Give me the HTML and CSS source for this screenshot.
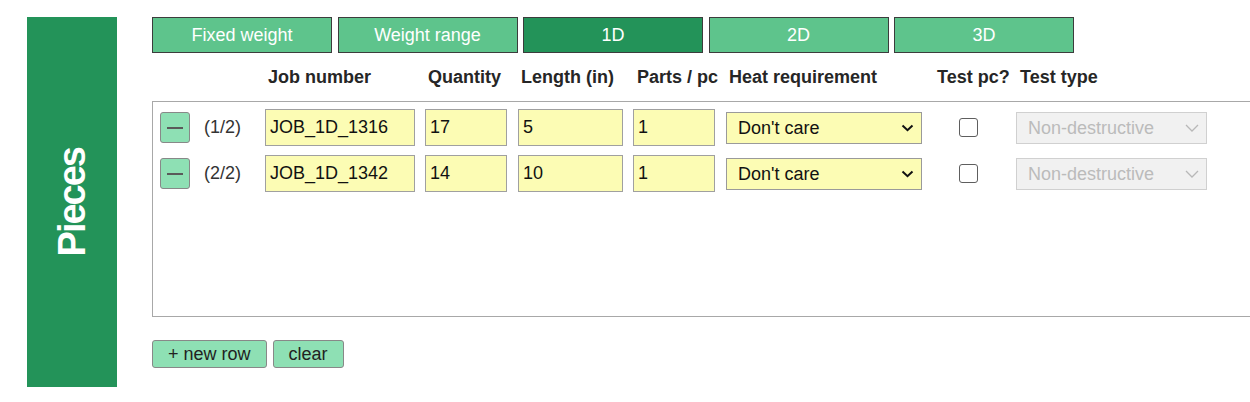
FILE: index.html
```html
<!DOCTYPE html>
<html lang="en">
<head>
<meta charset="utf-8">
<title>Pieces</title>
<link rel="stylesheet" href="styles.css">
</head>
<body>
<div class="page">
  <aside class="side"><span class="side-title">Pieces</span></aside>
  <main class="main">
    <nav class="tabs">
      <button class="tab">Fixed weight</button>
      <button class="tab">Weight range</button>
      <button class="tab active">1D</button>
      <button class="tab">2D</button>
      <button class="tab">3D</button>
    </nav>
    <div class="grid head">
      <span></span>
      <span></span>
      <span class="hcell">Job number</span>
      <span class="hcell">Quantity</span>
      <span class="hcell">Length (in)</span>
      <span class="hcell wide">Parts / pc</span>
      <span class="hcell">Heat requirement</span>
      <span class="hcell">Test pc?</span>
      <span class="hcell wide">Test type</span>
    </div>
    <div class="box">
      <div class="grid row">
        <button class="minus" aria-label="remove"><span class="dash"></span></button>
        <span class="idx">(1/2)</span>
        <input class="inp w-job" value="JOB_1D_1316">
        <input class="inp w-num" value="17">
        <input class="inp w-len" value="5">
        <input class="inp w-num" value="1">
        <div class="selwrap">
          <select class="sel"><option>Don't care</option></select>
          <svg class="chev" width="13" height="8" viewBox="0 0 13 8"><path d="M1.5 1.5 L6.5 6.2 L11.5 1.5" fill="none" stroke="#111" stroke-width="2"/></svg>
        </div>
        <input type="checkbox" class="chk">
        <div class="selwrap">
          <select class="sel dis" disabled><option>Non-destructive</option></select>
          <svg class="chev" width="14" height="8" viewBox="0 0 14 8"><path d="M1 1 L7 7 L13 1" fill="none" stroke="#b8b8b8" stroke-width="1.3"/></svg>
        </div>
      </div>
      <div class="grid row">
        <button class="minus" aria-label="remove"><span class="dash"></span></button>
        <span class="idx">(2/2)</span>
        <input class="inp w-job" value="JOB_1D_1342">
        <input class="inp w-num" value="14">
        <input class="inp w-len" value="10">
        <input class="inp w-num" value="1">
        <div class="selwrap">
          <select class="sel"><option>Don't care</option></select>
          <svg class="chev" width="13" height="8" viewBox="0 0 13 8"><path d="M1.5 1.5 L6.5 6.2 L11.5 1.5" fill="none" stroke="#111" stroke-width="2"/></svg>
        </div>
        <input type="checkbox" class="chk">
        <div class="selwrap">
          <select class="sel dis" disabled><option>Non-destructive</option></select>
          <svg class="chev" width="14" height="8" viewBox="0 0 14 8"><path d="M1 1 L7 7 L13 1" fill="none" stroke="#b8b8b8" stroke-width="1.3"/></svg>
        </div>
      </div>
    </div>
    <div class="actions">
      <button class="act">+ new row</button>
      <button class="act">clear</button>
    </div>
  </main>
</div>
</body>
</html>
```

FILE: styles.css
```css
* { box-sizing: border-box; }
html, body {
  margin: 0;
  padding: 0;
  background: #fff;
  overflow: hidden;
}
body {
  font-family: "Liberation Sans", Arial, sans-serif;
  font-size: 18px;
  color: #222;
}
.page {
  display: flex;
  gap: 35px;
  padding: 17px 0 0 27px;
  width: 1250px;
  height: 402px;
  overflow: hidden;
}
.side {
  flex: none;
  width: 90px;
  height: 370px;
  background: #239359;
  display: flex;
  align-items: center;
  justify-content: center;
}
.side-title {
  writing-mode: vertical-rl;
  transform: rotate(180deg);
  color: #fff;
  font-weight: bold;
  font-size: 38px;
  letter-spacing: -2px;
  line-height: 1;
}
.main {
  flex: none;
  width: 1110px;
  display: flex;
  flex-direction: column;
}
.tabs {
  display: flex;
  gap: 5.5px;
  height: 36px;
}
.tab {
  width: 180px;
  height: 36px;
  margin: 0;
  padding: 0;
  background: #5ec48c;
  border: 1px solid #3c3c3c;
  color: #fff;
  font-family: inherit;
  font-size: 18px;
}
.tab.active { background: #239359; }
.grid {
  display: grid;
  grid-template-columns: 44px 61px 160px 93px 115px 93px 208px 82px 191px;
  align-items: center;
}
.head {
  height: 48px;
  padding-left: 8px;
  font-weight: bold;
  color: #262626;
}
.hcell { padding-left: 3px; white-space: nowrap; }
.hcell.wide { padding-left: 4px; }
.box {
  height: 216px;
  border: 1px solid #a8a8a8;
  padding: 7px 0 0 7px;
  display: flex;
  flex-direction: column;
  gap: 9px;
}
.minus {
  width: 30px;
  height: 31px;
  margin: 0;
  padding: 0;
  background: #8ee0b4;
  border: 1px solid #888;
  border-radius: 3px;
  display: flex;
  align-items: center;
  justify-content: center;
}
.dash {
  display: block;
  width: 16px;
  height: 2px;
  background: #5a5a5a;
}
.idx { color: #333; }
.inp {
  height: 37px;
  margin: 0;
  padding: 0 0 0 4px;
  border: 1px solid #a0a0a0;
  background: #fcfcb4;
  font-family: inherit;
  font-size: 18px;
  color: #111;
  outline: none;
}
.w-job { width: 150px; }
.w-num { width: 82px; }
.w-len { width: 105px; }
.selwrap {
  position: relative;
  width: fit-content;
}
.sel {
  appearance: none;
  -webkit-appearance: none;
  width: 196px;
  height: 32px;
  margin: 0;
  padding: 0 0 0 11px;
  border: 1px solid #9a9a9a;
  border-radius: 0;
  background: #fcfcb4;
  font-family: inherit;
  font-size: 18px;
  color: #111;
  display: block;
}
.sel.dis {
  width: 191px;
  background: #f1f1f1;
  border-color: #d0d0d0;
  color: #bbb;
  opacity: 1;
}
.chev {
  position: absolute;
  right: 8px;
  top: 12px;
  pointer-events: none;
}
.chk {
  appearance: none;
  -webkit-appearance: none;
  width: 19px;
  height: 19px;
  margin: 0 0 0 25px;
  border: 1.5px solid #5e5e5e;
  border-radius: 3px;
  background: #fff;
}
.actions {
  display: flex;
  gap: 6px;
  margin-top: 23px;
}
.act {
  height: 28px;
  margin: 0;
  padding: 0 15px;
  background: #8ee0b4;
  border: 1px solid #888;
  border-radius: 3px;
  font-family: inherit;
  font-size: 18px;
  color: #222;
}
```
